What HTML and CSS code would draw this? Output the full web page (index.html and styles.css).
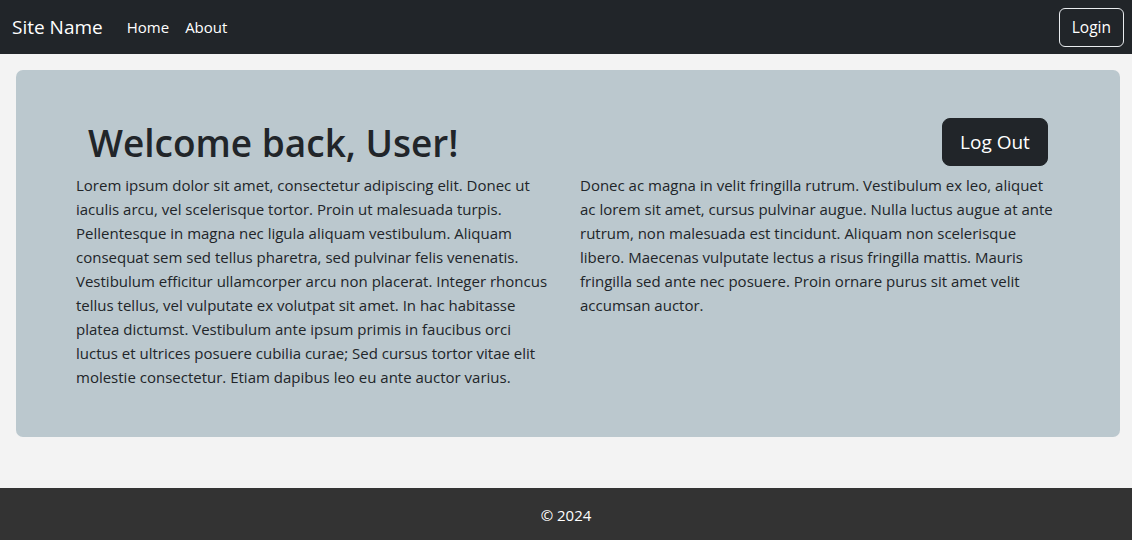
FILE: index.html
```html
<!DOCTYPE html>
<html lang="en">
<head>
<meta charset="utf-8">
<title>Site Name</title>
<link rel="stylesheet" href="styles.css">
</head>
<body>
<nav class="navbar">
  <a class="brand" href="#">Site Name</a>
  <ul class="nav-links">
    <li><a href="#">Home</a></li>
    <li><a href="#">About</a></li>
  </ul>
  <button class="btn-login">Login</button>
</nav>
<main class="main">
  <section class="card">
    <div class="card-head">
      <h1 class="title">Welcome back, User!</h1>
      <button class="btn-logout">Log Out</button>
    </div>
    <div class="cols">
      <p>Lorem ipsum dolor sit amet, consectetur adipiscing elit. Donec ut iaculis arcu, vel scelerisque tortor. Proin ut malesuada turpis. Pellentesque in magna nec ligula aliquam vestibulum. Aliquam consequat sem sed tellus pharetra, sed pulvinar felis venenatis. Vestibulum efficitur ullamcorper arcu non placerat. Integer rhoncus tellus tellus, vel vulputate ex volutpat sit amet. In hac habitasse platea dictumst. Vestibulum ante ipsum primis in faucibus orci luctus et ultrices posuere cubilia curae; Sed cursus tortor vitae elit molestie consectetur. Etiam dapibus leo eu ante auctor varius.</p>
      <p>Donec ac magna in velit fringilla rutrum. Vestibulum ex leo, aliquet ac lorem sit amet, cursus pulvinar augue. Nulla luctus augue at ante rutrum, non malesuada est tincidunt. Aliquam non scelerisque libero. Maecenas vulputate lectus a risus fringilla mattis. Mauris fringilla sed ante nec posuere. Proin ornare purus sit amet velit accumsan auctor.</p>
    </div>
  </section>
</main>
<footer class="footer">© 2024</footer>
</body>
</html>
```
FILE: styles.css
```css
* { box-sizing: border-box; }
html, body { margin: 0; padding: 0; }
body {
  font-family: "Open Sans", "Noto Sans", sans-serif;
  font-size: 15px;
  line-height: 24px;
  color: #212529;
  background: #f3f3f3;
  min-height: 100vh;
  display: flex;
  flex-direction: column;
}
a { text-decoration: none; color: inherit; }

.navbar {
  height: 54px;
  background: #212529;
  display: flex;
  align-items: center;
  padding: 0 8px 1px 12px;
}
.brand {
  color: #fff;
  font-size: 19px;
  line-height: 30px;
  margin-right: 24px;
}
.nav-links {
  list-style: none;
  margin: 0;
  padding: 0;
  display: flex;
  gap: 16px;
  flex: 1;
}
.nav-links a {
  color: #fff;
  font-size: 15px;
}
.btn-login {
  font-family: inherit;
  font-size: 15.5px;
  line-height: 24px;
  color: #fff;
  background: transparent;
  border: 1px solid #e9ecef;
  border-radius: 6px;
  padding: 6px 12px;
  height: 39px;
  margin-top: 1px;
}

.main {
  flex: 1;
  padding: 16px 12px 51px 16px;
}
.card {
  background: #bbc8ce;
  border-radius: 7px;
  padding: 48px 60px 32px;
  height: 367px;
}
.card-head {
  display: flex;
  align-items: center;
  justify-content: space-between;
  padding: 0 12px;
  margin-bottom: 7px;
}
.title {
  margin: 2px 0 0;
  font-size: 37px;
  font-weight: 600;
  line-height: 46px;
}
.btn-logout {
  font-family: inherit;
  font-size: 19px;
  line-height: 30px;
  color: #fff;
  background: #212529;
  border: 1px solid #212529;
  border-radius: 8px;
  padding: 8px 16px;
  height: 48px;
  width: 106px;
}
.cols {
  display: grid;
  grid-template-columns: 1fr 1fr;
  gap: 24px;
}
.cols p { margin: 0; }

.footer {
  height: 52px;
  background: #333;
  color: #fff;
  display: flex;
  align-items: center;
  justify-content: center;
  font-size: 15px;
  padding-top: 2px;
}
```
